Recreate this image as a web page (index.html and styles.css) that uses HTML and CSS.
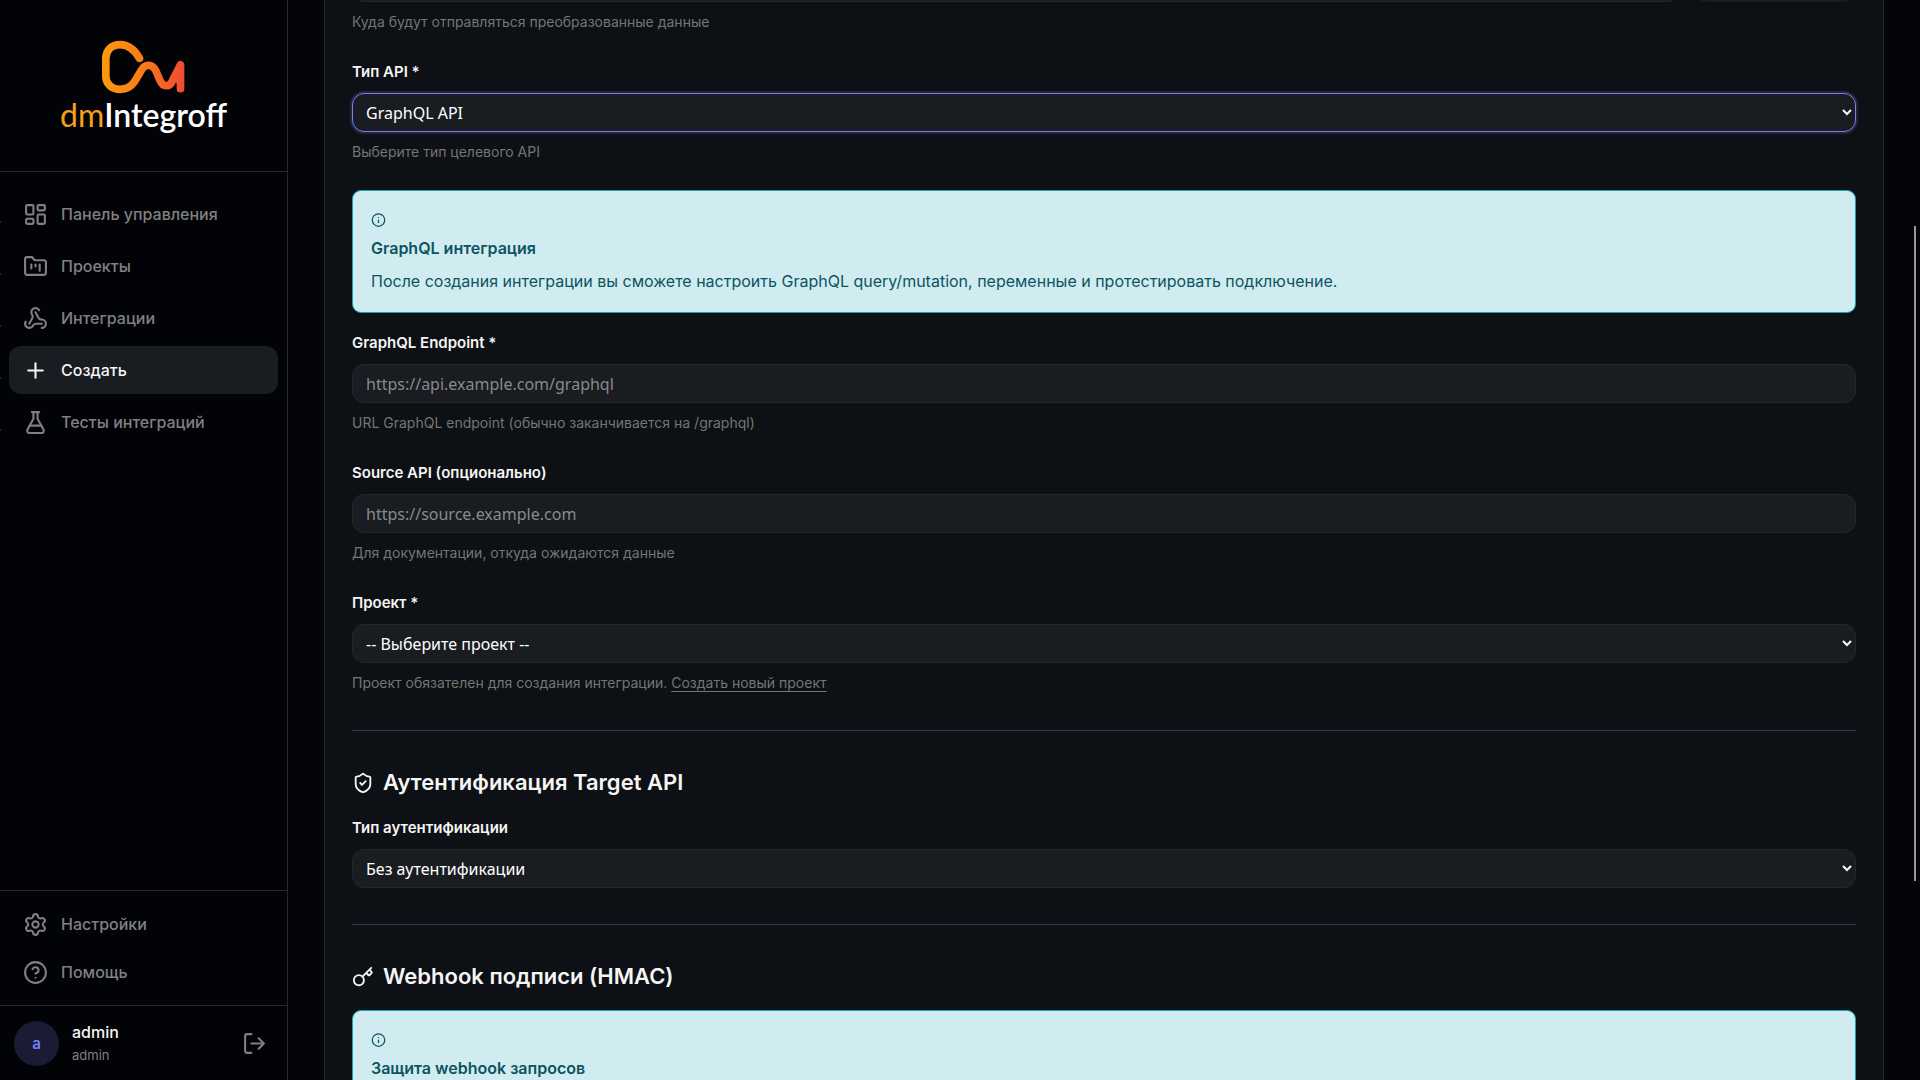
FILE: index.html
```html
<!DOCTYPE html>
<html lang="ru">
<head>
<meta charset="UTF-8">
<meta name="viewport" content="width=device-width, initial-scale=1.0">
<title>dmIntegroff - Создать интеграцию</title>
<link rel="stylesheet" href="styles.css">
</head>
<body>
<div class="layout">
    <aside class="sidebar">
        <div class="logo">
            <svg class="logo-mark" viewBox="300 118 260 168" fill="none" aria-hidden="true">
                <defs>
                    <linearGradient id="mark" gradientUnits="userSpaceOnUse" x1="305" y1="0" x2="553" y2="0">
                        <stop offset="0" stop-color="#fb9a0c"/>
                        <stop offset="0.5" stop-color="#fa7a18"/>
                        <stop offset="1" stop-color="#f04a32"/>
                    </linearGradient>
                </defs>
                <path d="M418 176C402 148 385 135 360 135C334 135 317 152 317 176V230C317 254 336 269 360 269C380 269 393 261 403 246L424 211C434 192 456 192 466 211L480 243C488 263 508 263 516 245L541 195V267" stroke="url(#mark)" stroke-width="23" stroke-linecap="round" stroke-linejoin="round"/>
                <path d="M541 195L519 246L541 256Z" fill="url(#mark)"/>
            </svg>
            <div class="logo-text"><span>dm</span>Integroff</div>
        </div>

        <nav class="nav">
            <a class="nav-item" href="#">
                <svg class="icon" viewBox="0 0 24 24"><rect x="3" y="3" width="7" height="9" rx="1"/><rect x="14" y="3" width="7" height="5" rx="1"/><rect x="14" y="12" width="7" height="9" rx="1"/><rect x="3" y="16" width="7" height="5" rx="1"/></svg>
                Панель управления
            </a>
            <a class="nav-item" href="#">
                <svg class="icon" viewBox="0 0 24 24"><path d="M4 20h16a2 2 0 0 0 2-2V8a2 2 0 0 0-2-2h-7.93a2 2 0 0 1-1.66-.9l-.82-1.2A2 2 0 0 0 7.93 3H4a2 2 0 0 0-2 2v13c0 1.100.9 2 2 2Z"/><path d="M8 10v4M12 10v2M16 10v6"/></svg>
                Проекты
            </a>
            <a class="nav-item" href="#">
                <svg class="icon" viewBox="0 0 24 24"><path d="M18 16.980h-5.990c-1.100 0-1.950.940-2.480 1.900A4 4 0 0 1 2 17c.010-.700.200-1.400.570-2"/><path d="m6 17 3.130-5.780c.530-.970.100-2.180-.500-3.100a4 4 0 1 1 6.890-4.060"/><path d="m12 6 3.130 5.730C15.660 12.700 16.900 13 18 13a4 4 0 0 1 0 8"/></svg>
                Интеграции
            </a>
            <a class="nav-item active" href="#">
                <svg class="icon" viewBox="0 0 24 24"><path d="M5 12h14M12 5v14"/></svg>
                Создать
            </a>
            <a class="nav-item" href="#">
                <svg class="icon" viewBox="0 0 24 24"><path d="M14 2v6a2 2 0 0 0 .245.960l5.510 10.080A2 2 0 0 1 18 22H6a2 2 0 0 1-1.755-2.960l5.510-10.080A2 2 0 0 0 10 8V2"/><path d="M6.453 15h11.094M8.500 2h7"/></svg>
                Тесты интеграций
            </a>
        </nav>

        <div class="nav-footer">
            <a class="nav-item" href="#">
                <svg class="icon" viewBox="0 0 24 24"><path d="M9.671 4.136a2.340 2.340 0 0 1 4.659 0 2.340 2.340 0 0 0 3.319 1.915 2.340 2.340 0 0 1 2.330 4.033 2.340 2.340 0 0 0 0 3.831 2.340 2.340 0 0 1-2.330 4.033 2.340 2.340 0 0 0-3.319 1.915 2.340 2.340 0 0 1-4.659 0 2.340 2.340 0 0 0-3.320-1.915 2.340 2.340 0 0 1-2.330-4.033 2.340 2.340 0 0 0 0-3.831A2.340 2.340 0 0 1 6.350 6.051a2.340 2.340 0 0 0 3.319-1.915"/><circle cx="12" cy="12" r="3"/></svg>
                Настройки
            </a>
            <a class="nav-item" href="#">
                <svg class="icon" viewBox="0 0 24 24"><circle cx="12" cy="12" r="10"/><path d="M9.090 9a3 3 0 0 1 5.830 1c0 2-3 3-3 3M12 17h.010"/></svg>
                Помощь
            </a>
        </div>

        <div class="user">
            <div class="avatar">a</div>
            <div class="user-info">
                <div class="user-name">admin</div>
                <div class="user-role">admin</div>
            </div>
            <button class="logout" type="button" aria-label="Выйти">
                <svg class="icon" viewBox="0 0 24 24"><path d="m16 17 5-5-5-5M21 12H9M9 21H5a2 2 0 0 1-2-2V5a2 2 0 0 1 2-2h4"/></svg>
            </button>
        </div>
    </aside>

    <main class="main">
        <form class="card">
            <div class="field">
                <div class="input-row">
                    <input class="control" id="target" type="text" aria-label="Target API">
                    <button class="btn" type="button" aria-label="Проверить"></button>
                </div>
                <p class="hint">Куда будут отправляться преобразованные данные</p>
            </div>

            <div class="field">
                <label for="api-type">Тип API *</label>
                <select class="control focused" id="api-type">
                    <option>GraphQL API</option>
                </select>
                <p class="hint">Выберите тип целевого API</p>
            </div>

            <div class="alert">
                <svg class="icon" viewBox="0 0 24 24"><circle cx="12" cy="12" r="10"/><path d="M12 16v-4M12 8h.010"/></svg>
                <strong>GraphQL интеграция</strong>
                <p>После создания интеграции вы сможете настроить GraphQL query/mutation, переменные и протестировать подключение.</p>
            </div>

            <div class="field">
                <label for="endpoint">GraphQL Endpoint *</label>
                <input class="control" id="endpoint" type="url" placeholder="https://api.example.com/graphql">
                <p class="hint">URL GraphQL endpoint (обычно заканчивается на /graphql)</p>
            </div>

            <div class="field">
                <label for="source">Source API (опционально)</label>
                <input class="control" id="source" type="url" placeholder="https://source.example.com">
                <p class="hint">Для документации, откуда ожидаются данные</p>
            </div>

            <div class="field">
                <label for="project">Проект *</label>
                <select class="control" id="project">
                    <option>-- Выберите проект --</option>
                </select>
                <p class="hint">Проект обязателен для создания интеграции. <a href="#">Создать новый проект</a></p>
            </div>

            <hr>

            <h3>
                <svg class="icon" viewBox="0 0 24 24"><path d="M20 13c0 5-3.500 7.500-7.660 8.950a1 1 0 0 1-.670-.010C7.500 20.500 4 18 4 13V6a1 1 0 0 1 1-1c2 0 4.500-1.200 6.240-2.720a1.170 1.170 0 0 1 1.520 0C14.510 3.810 17 5 19 5a1 1 0 0 1 1 1z"/><path d="m9 12 2 2 4-4"/></svg>
                Аутентификация Target API
            </h3>
            <div class="field">
                <label for="auth">Тип аутентификации</label>
                <select class="control" id="auth">
                    <option>Без аутентификации</option>
                </select>
            </div>

            <hr>

            <h3>
                <svg class="icon" viewBox="0 0 24 24"><path d="m15.500 7.500 2.300 2.300a1 1 0 0 0 1.400 0l2.100-2.100a1 1 0 0 0 0-1.400L19 4M21 2l-9.600 9.600"/><circle cx="7.500" cy="15.500" r="5.500"/></svg>
                Webhook подписи (HMAC)
            </h3>
            <div class="alert">
                <svg class="icon" viewBox="0 0 24 24"><circle cx="12" cy="12" r="10"/><path d="M12 16v-4M12 8h.010"/></svg>
                <strong>Защита webhook запросов</strong>
            </div>
        </form>
        <div class="scroll-thumb"></div>
    </main>
</div>
</body>
</html>
```
FILE: styles.css
```css
:root{
    --bg:#040508;
    --sidebar:#020307;
    --card:#0d1014;
    --input:#191c20;
    --line:#25272a;
    --text:#f5f5f5;
    --muted:#808080;
    --accent:#7c7ff2;
}
*{box-sizing:border-box;margin:0;padding:0;}
body{
    font-family:'Inter',sans-serif;
    font-size:16px;
    background:var(--bg);
    color:var(--text);
    overflow:hidden;
}
.layout{
    display:flex;
    height:100vh;
}
.icon{
    width:25px;
    height:25px;
    flex-shrink:0;
    fill:none;
    stroke:currentColor;
    stroke-width:2;
    stroke-linecap:round;
    stroke-linejoin:round;
}

/* sidebar */
.sidebar{
    width:288px;
    flex-shrink:0;
    display:flex;
    flex-direction:column;
    background:var(--sidebar);
    border-right:1px solid var(--line);
}
.logo{
    display:flex;
    flex-direction:column;
    align-items:center;
    height:172px;
    padding-top:39px;
    border-bottom:1px solid var(--line);
}
.logo-mark{
    width:87px;
    height:56px;
}
.logo-text{
    font-family:'Lato',sans-serif;
    font-size:32px;
    font-weight:600;
    line-height:40px;
    color:#fff;
}
.logo-text span{
    color:#f9a01b;
    font-weight:400;
}
.nav{
    flex:1;
    display:flex;
    flex-direction:column;
    gap:4px;
    padding:18px 9px;
}
.nav-item{
    position:relative;
    display:flex;
    align-items:center;
    gap:13px;
    height:48px;
    padding:0 14px;
    border-radius:12px;
    color:var(--muted);
    font-weight:500;
    text-decoration:none;
}
.nav-item.active{
    background:var(--input);
    color:var(--text);
}
.nav .nav-item::before{
    content:"";
    position:absolute;
    left:-9px;
    top:31px;
    width:1px;
    height:2px;
    background:#6b0f14;
}
.nav-footer{
    padding:9px;
    border-top:1px solid var(--line);
}
.user{
    display:flex;
    align-items:center;
    gap:13px;
    padding:14px;
    border-top:1px solid var(--line);
}
.avatar{
    width:45px;
    height:45px;
    border-radius:50%;
    background:#1b1c33;
    color:var(--accent);
    font-size:15px;
    font-weight:600;
    line-height:45px;
    text-align:center;
}
.user-info{
    flex:1;
}
.user-name{
    font-weight:500;
    line-height:24px;
}
.user-role{
    font-size:13px;
    line-height:22px;
    color:var(--muted);
}
.logout{
    display:flex;
    padding:6px;
    border:0;
    background:none;
    color:var(--muted);
}

/* form */
.main{
    flex:1;
    position:relative;
    padding:0 36px;
    overflow:hidden;
}
.card{
    margin-top:-37px;
    padding:0 27px 27px;
    background:var(--card);
    border:1px solid var(--line);
    border-top:0;
}
.field{
    margin-bottom:27px;
}
label{
    display:block;
    margin-bottom:9px;
    font-size:15px;
    font-weight:600;
    line-height:24px;
}
.control{
    display:block;
    width:100%;
    height:39px;
    padding:0 13px;
    font-family:'Noto Sans',sans-serif;
    font-size:16px;
    color:#fff;
    background:var(--input);
    border:1px solid var(--line);
    border-radius:12px;
    outline:none;
}
select.control{
    padding:0 9px;
}
.control::placeholder{
    color:#8a8a8a;
}
.control.focused{
    border-color:var(--accent);
    box-shadow:0 0 0 2px rgba(124,127,242,.2);
}
.input-row{
    display:flex;
    gap:14px;
}
.btn{
    width:162px;
    flex-shrink:0;
    border:0;
    border-radius:12px;
    background:var(--input);
}
.hint{
    margin-top:9px;
    font-size:14px;
    line-height:22px;
    color:#757575;
}
.hint a{
    color:inherit;
    text-underline-offset:3px;
}
.alert{
    margin-bottom:18px;
    padding:18px;
    color:#0c5460;
    background:#d1ecf1;
    border:1px solid #17a2b8;
    border-radius:9px;
}
.alert .icon{
    display:block;
    width:15px;
    height:22px;
    margin-bottom:4px;
}
.alert strong{
    display:block;
    margin-bottom:8px;
    font-weight:600;
    line-height:26px;
}
.alert p{
    line-height:25px;
}
hr{
    margin:36px 0;
    border:0;
    border-top:1px solid #333a47;
}
h3{
    display:flex;
    align-items:center;
    gap:9px;
    margin-bottom:18px;
    font-size:22px;
    font-weight:600;
    line-height:31px;
}
h3 .icon{
    width:22px;
    height:22px;
}
.scroll-thumb{
    position:absolute;
    top:226px;
    right:4px;
    width:2px;
    height:655px;
    background:#999;
}
```
